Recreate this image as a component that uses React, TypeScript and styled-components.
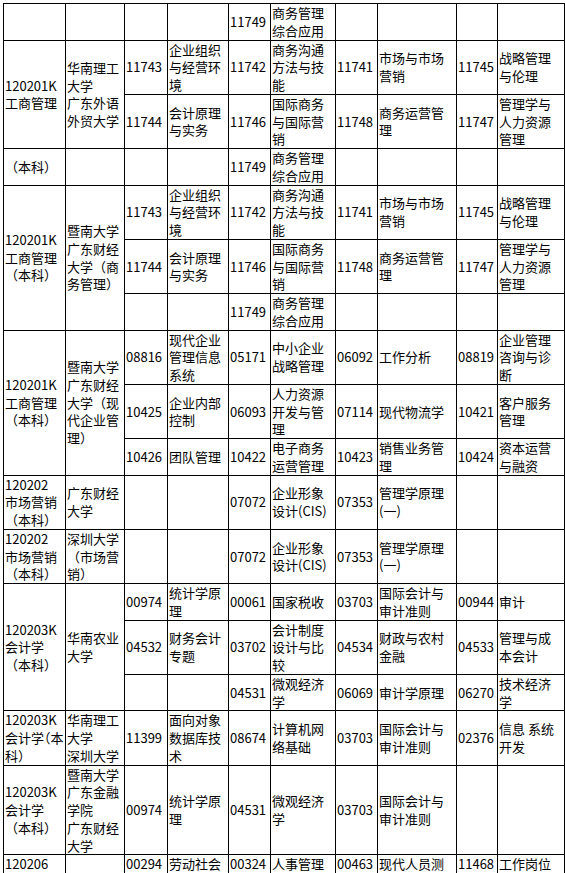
import React from 'react';
import styled, { createGlobalStyle } from 'styled-components';

type CellData = string | { text: string; rows?: number; narrowPunct?: boolean };

// column widths, measured from the grid lines
const widths = [62, 59, 43, 61, 42, 65, 42, 79, 41, 67];

const rows: CellData[][] = [
  ['', '', '', '', '11749', '商务管理|综合应用', '', '', '', ''],
  [
    { text: '120201K|工商管理', rows: 2 },
    { text: '华南理工|大学|广东外语|外贸大学', rows: 2 },
    '11743', '企业组织|与经营环|境', '11742', '商务沟通|方法与技|能',
    '11741', '市场与市场|营销', '11745', '战略管理|与伦理',
  ],
  ['11744', '会计原理|与实务', '11746', '国际商务|与国际营|销', '11748', '商务运营管|理', '11747', '管理学与|人力资源|管理'],
  ['（本科）', '', '', '', '11749', '商务管理|综合应用', '', '', '', ''],
  [
    { text: '120201K|工商管理|（本科）', rows: 3 },
    { text: '暨南大学|广东财经|大学（商|务管理）', rows: 3 },
    '11743', '企业组织|与经营环|境', '11742', '商务沟通|方法与技|能',
    '11741', '市场与市场|营销', '11745', '战略管理|与伦理',
  ],
  ['11744', '会计原理|与实务', '11746', '国际商务|与国际营|销', '11748', '商务运营管|理', '11747', '管理学与|人力资源|管理'],
  ['', '', '11749', '商务管理|综合应用', '', '', '', ''],
  [
    { text: '120201K|工商管理|（本科）', rows: 3 },
    { text: '暨南大学|广东财经|大学（现|代企业管|理）', rows: 3 },
    '08816', '现代企业|管理信息|系统', '05171', '中小企业|战略管理',
    '06092', '工作分析', '08819', '企业管理|咨询与诊|断',
  ],
  ['10425', '企业内部|控制', '06093', '人力资源|开发与管|理', '07114', '现代物流学', '10421', '客户服务|管理'],
  ['10426', '团队管理', '10422', '电子商务|运营管理', '10423', '销售业务管|理', '10424', '资本运营|与融资'],
  ['120202|市场营销|（本科）', '广东财经|大学', '', '', '07072', '企业形象|设计(CIS)', '07353', '管理学原理|(一)', '', ''],
  ['120202|市场营销|（本科）', '深圳大学|（市场营|销）', '', '', '07072', '企业形象|设计(CIS)', '07353', '管理学原理|(一)', '', ''],
  [
    { text: '120203K|会计学|（本科）', rows: 3 },
    { text: '华南农业|大学', rows: 3 },
    '00974', '统计学原|理', '00061', '国家税收', '03703', '国际会计与|审计准则', '00944', '审计',
  ],
  ['04532', '财务会计|专题', '03702', '会计制度|设计与比|较', '04534', '财政与农村|金融', '04533', '管理与成|本会计'],
  ['', '', '04531', '微观经济|学', '06069', '审计学原理', '06270', '技术经济|学'],
  [
    { text: '120203K|会计学（本|科）', narrowPunct: true },
    '华南理工|大学|深圳大学', '11399', '面向对象|数据库技|术', '08674', '计算机网|络基础',
    '03703', '国际会计与|审计准则', '02376', '信息 系统|开发',
  ],
  ['120203K|会计学|（本科）', '暨南大学|广东金融|学院|广东财经|大学', '00974', '统计学原|理', '04531', '微观经济|学', '03703', '国际会计与|审计准则', '', ''],
  ['120206', '', '00294', '劳动社会', '00324', '人事管理', '00463', '现代人员测', '11468', '工作岗位'],
];

const Lines: React.FC<{ text: string }> = ({ text }) => (
  <>
    {text.split('|').map((line, i) => (
      <React.Fragment key={i}>
        {i > 0 && <br />}
        {line}
      </React.Fragment>
    ))}
  </>
);

const App: React.FC = () => {
  return (
    <Page>
      <GlobalStyle />
      <Table>
        <colgroup>
          {widths.map((w, i) => (
            <Col key={i} $width={w} />
          ))}
        </colgroup>
        <tbody>
          {rows.map((row, r) => (
            <tr key={r}>
              {row.map((cell, c) =>
                typeof cell === 'string' ? (
                  <Cell key={c}>
                    <Lines text={cell} />
                  </Cell>
                ) : (
                  <Cell key={c} rowSpan={cell.rows} $narrowPunct={cell.narrowPunct}>
                    <Lines text={cell.text} />
                  </Cell>
                )
              )}
            </tr>
          ))}
        </tbody>
      </Table>
    </Page>
  );
};

const GlobalStyle = createGlobalStyle`
  body {
    margin: 0;
    background: #fff;
  }
`;

const Page = styled.div`
  padding: 3px 0 0 3px;
  font-family: "Noto Sans CJK SC", "Noto Sans", sans-serif;
  font-size: 13px;
  line-height: 17.75px;
  color: #000;
`;

const Table = styled.table`
  width: 561px;
  table-layout: fixed;
  border-collapse: collapse;
`;

const Col = styled.col<{ $width: number }>`
  width: ${(p) => p.$width}px;
`;

const Cell = styled.td<{ $narrowPunct?: boolean }>`
  border: 1px solid #000;
  padding: 0 0 0 1px;
  vertical-align: middle;
  text-align: left;
  white-space: nowrap;
  font-feature-settings: ${(p) => (p.$narrowPunct ? '"halt"' : 'normal')};
`;

export default App;
